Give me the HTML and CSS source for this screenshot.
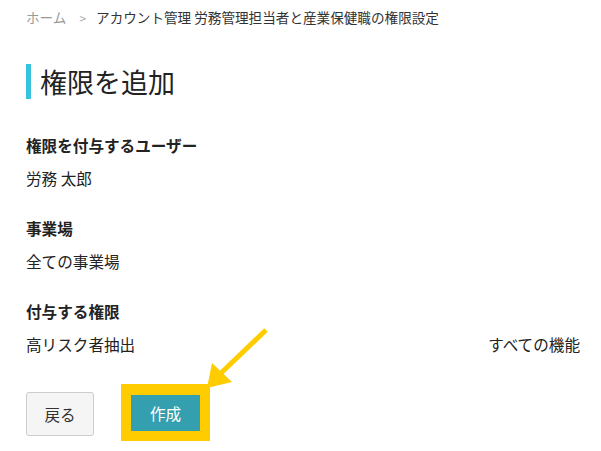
FILE: index.html
```html
<!DOCTYPE html>
<html lang="ja">
<head>
<meta charset="utf-8">
<link rel="stylesheet" href="styles.css">
</head>
<body>
<div class="page">
  <nav class="crumbs">
    <span class="crumb-home">ホーム</span>
    <span class="crumb-sep">&gt;</span>
    <span class="crumb-current">アカウント管理 労務管理担当者と産業保健職の権限設定</span>
  </nav>
  <h1 class="title">権限を追加</h1>
  <dl class="fields">
    <dt class="label">権限を付与するユーザー</dt>
    <dd class="value">労務 太郎</dd>
    <dt class="label">事業場</dt>
    <dd class="value">全ての事業場</dd>
    <dt class="label">付与する権限</dt>
    <dd class="value value-row"><span>高リスク者抽出</span><span>すべての機能</span></dd>
  </dl>
  <div class="actions">
    <button class="btn btn-back">戻る</button>
    <div class="highlight"><button class="btn btn-create">作成</button></div>
  </div>
  <svg class="arrow" width="601" height="451" viewBox="0 0 601 451">
    <line x1="266" y1="330" x2="219" y2="375" stroke="#ffcc00" stroke-width="5"/>
    <polygon points="207,388 212,363 232,382" fill="#ffcc00"/>
  </svg>
</div>
</body>
</html>
```

FILE: styles.css
```css
html, body {
  margin: 0;
  padding: 0;
  background: #ffffff;
}
body {
  font-family: "Noto Sans CJK JP", "Noto Sans", sans-serif;
  color: #222222;
}
.page {
  position: relative;
  width: 601px;
  height: 451px;
  box-sizing: border-box;
  padding: 0 21px 0 26px;
  overflow: hidden;
}
.crumbs {
  display: flex;
  align-items: center;
  height: 34px;
  font-size: 13.6px;
}
.crumb-home {
  color: #999999;
}
.crumb-sep {
  color: #aaaaaa;
  margin: 0 10px 0 13px;
  font-size: 12px;
}
.crumb-current {
  color: #333333;
}
.title {
  margin: 30px 0 0 0;
  border-left: 5px solid #38c3dc;
  padding-left: 9px;
  font-size: 27px;
  line-height: 35px;
  height: 35px;
  font-weight: 400;
  color: #222222;
}
.fields {
  margin: 34px 0 0 0;
}
.label {
  font-size: 15.6px;
  font-weight: 700;
  line-height: 24px;
  margin: 0 0 9px 0;
}
.value {
  font-size: 15.6px;
  line-height: 24px;
  margin: 0 0 26px 0;
}
.value-row {
  display: flex;
  justify-content: space-between;
  margin-bottom: 0;
}
.actions {
  display: flex;
  align-items: center;
  margin-top: 28px;
  gap: 27px;
}
.btn {
  font-family: "Noto Sans CJK JP", "Noto Sans", sans-serif;
  font-size: 15.6px;
  border-radius: 3px;
  padding: 0;
  cursor: pointer;
}
.btn-back {
  width: 68px;
  height: 44px;
  background: #f5f5f5;
  border: 1px solid #cccccc;
  color: #333333;
  margin-top: 3px;
}
.highlight {
  border-style: solid;
  border-color: #ffcc00;
  border-width: 11px 10px 10px 10px;
  background: #ffcc00;
  display: flex;
}
.btn-create {
  width: 69px;
  height: 36px;
  background: #349fae;
  border: none;
  border-radius: 0;
  color: #ffffff;
}
.arrow {
  position: absolute;
  left: 0;
  top: 0;
  pointer-events: none;
}
```
